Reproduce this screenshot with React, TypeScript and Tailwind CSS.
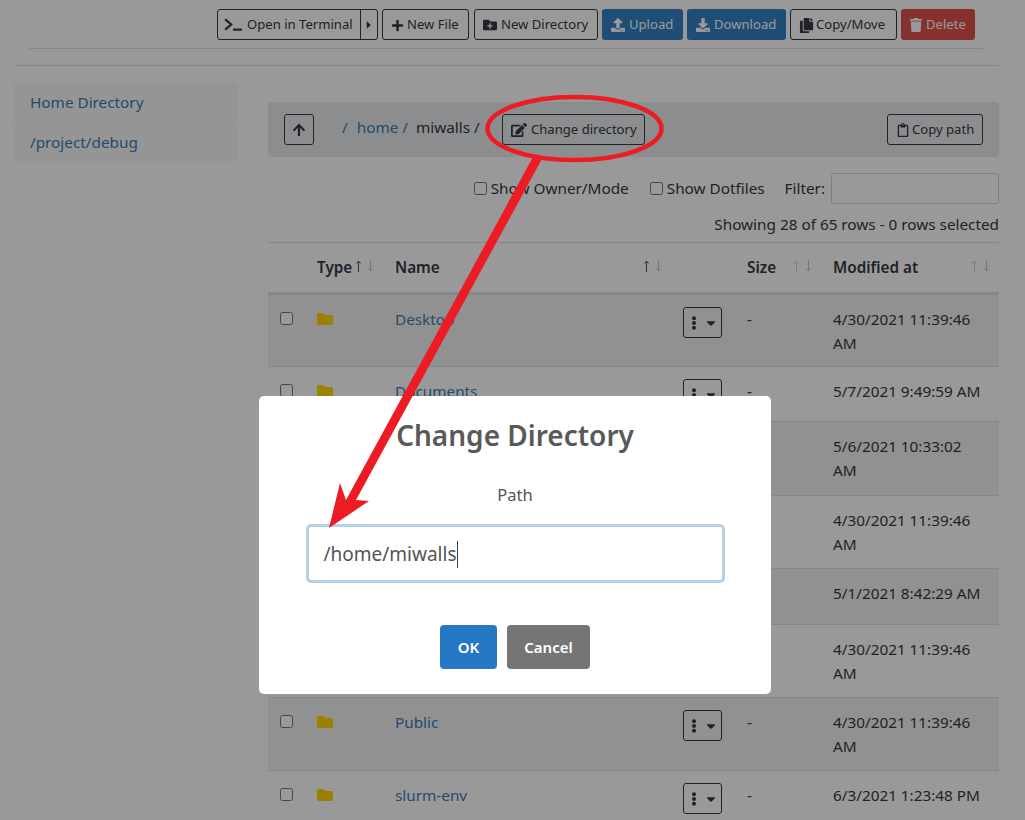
import {
  FaArrowUp,
  FaCaretDown,
  FaCaretRight,
  FaCopy,
  FaDownload,
  FaEdit,
  FaEllipsisV,
  FaFolder,
  FaFolderPlus,
  FaPlus,
  FaRegClipboard,
  FaTrash,
  FaUpload,
} from "react-icons/fa";

const rows = [
  { name: "Desktop", modified: "4/30/2021 11:39:46 AM", h: "h-[73px]" },
  { name: "Documents", modified: "5/7/2021 9:49:59 AM", h: "h-[55px]" },
  { name: "Downloads", modified: "5/6/2021 10:33:02 AM", h: "h-[74px]" },
  { name: "Music", modified: "4/30/2021 11:39:46 AM", h: "h-[73px]" },
  { name: "ondemand", modified: "5/1/2021 8:42:29 AM", h: "h-[56px]" },
  { name: "Pictures", modified: "4/30/2021 11:39:46 AM", h: "h-[73px]" },
  { name: "Public", modified: "4/30/2021 11:39:46 AM", h: "h-[73px]" },
  { name: "slurm-env", modified: "6/3/2021 1:23:48 PM", h: "h-[74px]" },
];

const outlineBtn =
  "flex h-[31px] items-center rounded-[3px] border border-[#343a40] pt-px text-[13.1px] text-[#343a40]";
const blueBtn =
  "flex h-[31px] items-center rounded-[3px] bg-[#3480c4] pt-px text-[13.1px] text-white";

function SortArrows({ active }: { active?: boolean }) {
  return (
    <span className="-mt-[4px] ml-auto flex gap-[5px]">
      <svg viewBox="0 0 7 12" className={"h-[12px] w-[7px] " + (active ? "text-[#5f5340]" : "text-[#d4d4d4]")} fill="none" stroke="currentColor">
        <path d="M3.5 12V1M1.5 3.5 3.5 1l2 2.5" />
      </svg>
      <svg viewBox="0 0 7 12" className="h-[12px] w-[7px] text-[#c4c4c4]" fill="none" stroke="currentColor">
        <path d="M3.5 0v11M1.5 8.5l2 2.5 2-2.5" />
      </svg>
    </span>
  );
}

function Toolbar() {
  return (
    <div className="ml-[29px] mr-[42px] flex h-[49px] items-start justify-end gap-[4px] border-b border-[#dee2e6] pr-[8px] pt-[9px]">
      <div className={outlineBtn + " w-[161px]"}>
        <span className="flex flex-1 items-center pl-[6px]">
          <svg viewBox="0 0 20 14" className="mr-[4px] h-[13px] w-[19px]" fill="none" stroke="#343a40" strokeWidth="2.4">
            <path d="M1 1.5 7.5 7 1 12.5" />
            <path d="M9.5 12.5H19" />
          </svg>
          Open in Terminal
        </span>
        <span className="-mt-px flex h-[29px] w-[17px] items-center justify-center border-l border-[#343a40]">
          <FaCaretRight className="text-[12px]" />
        </span>
      </div>
      <div className={outlineBtn + " w-[87px] pl-[8px]"}>
        <FaPlus className="mr-[3px] text-[13px]" />
        New File
      </div>
      <div className={outlineBtn + " ml-px w-[124px] pl-[8px]"}>
        <FaFolderPlus className="mr-[4px] text-[14px]" />
        New Directory
      </div>
      <div className={blueBtn + " w-[81px] pl-[9px]"}>
        <FaUpload className="mr-[4px] text-[14px]" />
        Upload
      </div>
      <div className={blueBtn + " w-[99px] pl-[9px]"}>
        <FaDownload className="mr-[4px] text-[14px]" />
        Download
      </div>
      <div className={outlineBtn + " w-[107px] pl-[8px]"}>
        <FaCopy className="mr-[2px] text-[15px]" />
        Copy/Move
      </div>
      <div className="flex h-[31px] w-[74px] items-center rounded-[3px] bg-[#e0534e] pl-[8px] pt-px text-[13.1px] text-white">
        <FaTrash className="mr-[3px] text-[14px]" />
        Delete
      </div>
    </div>
  );
}

function Sidebar() {
  return (
    <div className="w-[224px] shrink-0 text-[15.3px] leading-[40px] text-[#3c7cb8]">
      <div className="h-[40px] rounded-[4px] bg-[#f8f9fa] pl-[16px]">Home Directory</div>
      <div className="h-[40px] rounded-[4px] bg-[#f8f9fa] pl-[16px]">/project/debug</div>
    </div>
  );
}

function Breadcrumb() {
  return (
    <div className="flex h-[55px] items-center rounded-[4px] bg-[#e9ecef] pl-[16px] pr-[16px]">
      <div className="flex h-[31px] w-[30px] items-center justify-center rounded-[3px] border border-[#343a40]">
        <FaArrowUp className="text-[14px] text-[#343a40]" />
      </div>
      <div className="ml-[28px] flex items-center pb-[5px] text-[15.3px] text-[#343a40]">
        <span className="text-[#3c7cb8]">/</span>
        <span className="ml-[9px] text-[#3c7cb8]">home /</span>
        <span className="ml-[8px]">miwalls /</span>
      </div>
      <div className={outlineBtn + " ml-auto w-[143px] pl-[8px] text-[12.7px]"}>
        <FaEdit className="mr-[4px] text-[16px]" />
        Change directory
      </div>
      <div className={outlineBtn + " ml-[242px] w-[96px] pl-[8px]"}>
        <FaRegClipboard className="mr-[2px] text-[14px]" />
        Copy path
      </div>
    </div>
  );
}

function FileTable() {
  return (
    <table className="w-full table-fixed border-collapse text-[15.3px] text-[#343a40]">
      <colgroup>
        <col className="w-[37px]" />
        <col className="w-[78px]" />
        <col className="w-[288px]" />
        <col className="w-[64px]" />
        <col className="w-[86px]" />
        <col />
      </colgroup>
      <thead>
        <tr className="h-[51px] border-t border-b-[3px] border-t-[#dee2e6] border-b-[#dee2e6]">
          <th />
          <th className="pl-[12px] pr-[9px] text-left font-semibold">
            <div className="flex items-center">
              Type
              <SortArrows active />
            </div>
          </th>
          <th className="pl-[12px] pr-[9px] text-left font-semibold">
            <div className="flex items-center">
              Name
              <SortArrows active />
            </div>
          </th>
          <th />
          <th className="pl-[12px] pr-[9px] text-left font-semibold">
            <div className="flex items-center">
              Size
              <SortArrows />
            </div>
          </th>
          <th className="pl-[12px] pr-[9px] text-left font-semibold">
            <div className="flex items-center">
              Modified at
              <SortArrows />
            </div>
          </th>
        </tr>
      </thead>
      <tbody>
        {rows.map((row, i) => (
          <tr
            key={row.name}
            className={
              row.h + " border-b border-[#dee2e6] align-top " + (i % 2 === 0 ? "bg-[#f2f2f2]" : "")
            }
          >
            <td className="pl-[12px] pt-[17px]">
              <input type="checkbox" className="block h-[13px] w-[13px]" readOnly />
            </td>
            <td className="px-[12px] pt-[16px]">
              <FaFolder className="h-[16px] w-[16px] text-[#ffd900]" />
            </td>
            <td className="px-[12px] pt-[12px] leading-[24px] text-[#3c7cb8]">{row.name}</td>
            <td className="px-[12px] pt-[12px]">
              <div className="flex h-[31px] w-[39px] items-center justify-center gap-[3px] rounded-[3px] border border-[#343a40]">
                <FaEllipsisV className="text-[14px]" />
                <FaCaretDown className="text-[14px]" />
              </div>
            </td>
            <td className="px-[12px] pt-[12px] leading-[24px]">-</td>
            <td className="px-[12px] pt-[12px] leading-[24px]">{row.modified}</td>
          </tr>
        ))}
      </tbody>
    </table>
  );
}

function ChangeDirectoryModal() {
  return (
    <div className="absolute inset-0 flex items-start justify-center bg-black/40 pl-[5px] pt-[396px]">
      <div className="flex h-[298px] w-[512px] flex-col items-center rounded-[5px] bg-white pt-[17px] text-[#545454]">
        <h2 className="text-[28px] font-semibold leading-[45px] text-[#595959]">Change Directory</h2>
        <label className="mt-[25px] text-[16.5px] leading-[24px]">Path</label>
        <div className="mt-[17px] flex h-[59px] w-[419px] items-center rounded-[5px] border-[3px] border-[#b4d0e9] pl-[15px] pt-[2px] text-[19px]">
          /home/miwalls
          <span className="h-[27px] w-px bg-[#343a40]" />
        </div>
        <div className="mt-[42px] flex gap-[10px] text-[15px] font-semibold text-white">
          <div className="flex h-[44px] w-[57px] items-center justify-center rounded-[4px] bg-[#2778c4]">OK</div>
          <div className="flex h-[44px] w-[83px] items-center justify-center rounded-[4px] bg-[#757575]">Cancel</div>
        </div>
      </div>
    </div>
  );
}

export default function App() {
  return (
    <div className="relative h-[820px] overflow-hidden bg-white font-['Noto_Sans','Open_Sans',sans-serif]">
      <Toolbar />
      <div className="ml-[14px] mr-[26px] mt-[16px] border-t border-[#dee2e6] pt-[16px]">
        <div className="flex gap-[30px]">
          <Sidebar />
          <div className="min-w-0 flex-1 pt-[20px]">
            <Breadcrumb />
            <div className="mt-[16px] flex h-[31px] items-center justify-end text-[15.3px] text-[#343a40]">
              <label className="flex items-center gap-[4px]">
                <input type="checkbox" className="h-[13px] w-[13px]" readOnly />
                Show Owner/Mode
              </label>
              <label className="ml-[21px] flex items-center gap-[4px]">
                <input type="checkbox" className="h-[13px] w-[13px]" readOnly />
                Show Dotfiles
              </label>
              <span className="ml-[20px]">Filter:</span>
              <div className="ml-[6px] h-[31px] w-[168px] rounded-[3px] border border-[#ced4da] bg-white" />
            </div>
            <div className="mt-[8px] text-right text-[15.3px] leading-[24px] text-[#343a40]">
              Showing 28 of 65 rows - 0 rows selected
            </div>
            <div className="mt-[6px]">
              <FileTable />
            </div>
          </div>
        </div>
      </div>
      <ChangeDirectoryModal />
      {/* hand drawn annotation on top of the screenshot */}
      <svg className="pointer-events-none absolute inset-0 h-[820px] w-[1025px]" viewBox="0 0 1025 820">
        <ellipse cx="574.5" cy="128.5" rx="87" ry="31.5" fill="none" stroke="#ed1c24" strokeWidth="4.5" />
        <polygon fill="#ed1c24" points="533,157 543,157 356,500 369,501 329,528 340,483 346,500" />
      </svg>
    </div>
  );
}
